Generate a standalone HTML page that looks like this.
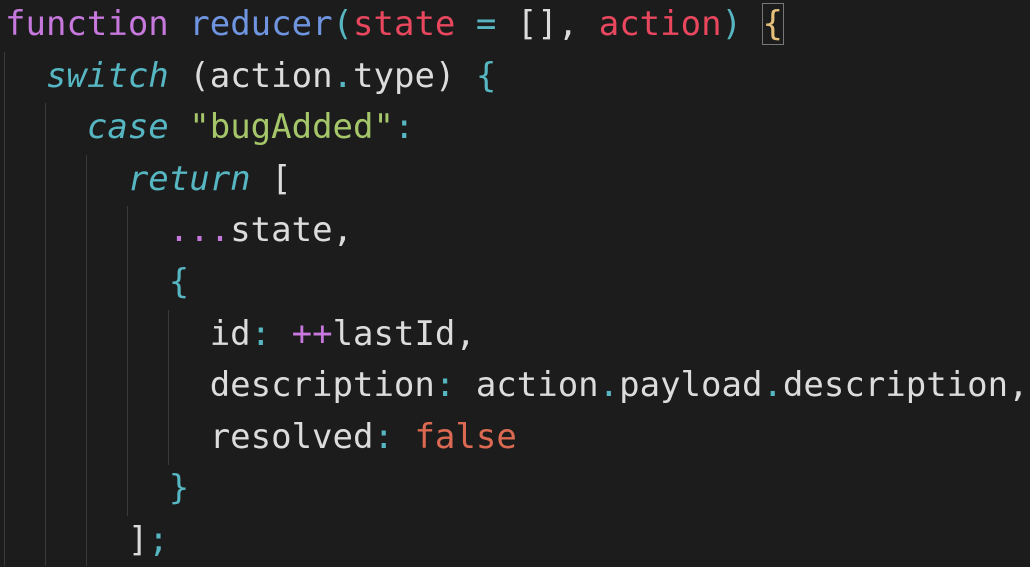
<!DOCTYPE html>
<html><head><style>
html,body{margin:0;padding:0;background:#1c1c1c;width:1030px;height:566px;overflow:hidden}
pre{margin:0;position:absolute;left:5px;top:-1px;font-family:"DejaVu Sans Mono","Liberation Mono",monospace;font-size:34px;line-height:51.6px;color:#dcdcdc;white-space:pre}
.k{color:#c678dd}.f{color:#6f95e0}.p{color:#e8475e}.c{color:#56b6c2;font-style:italic}.cy{color:#56b6c2}.s{color:#a5c76a}.o{color:#dc6a52}
.y{color:#e5c07b;outline:1px solid #777;}
.g{position:absolute;width:1px;background:#3a3a3a}
</style></head><body>
<div class="g" style="left:4px;top:52px;height:514px"></div>
<div class="g" style="left:45px;top:103px;height:463px"></div>
<div class="g" style="left:86px;top:155px;height:411px"></div>
<div class="g" style="left:127px;top:206px;height:310px"></div>
<div class="g" style="left:168px;top:310px;height:155px"></div>
<pre><span class="k">function</span> <span class="f">reducer</span><span class="cy">(</span><span class="p">state</span> <span class="cy">=</span> [], <span class="p">action</span><span class="cy">)</span> <span class="y">{</span>
  <span class="c">switch</span> (action<span class="cy">.</span>type) <span class="cy">{</span>
    <span class="c">case</span> <span class="s">"bugAdded"</span><span class="cy">:</span>
      <span class="c">return</span> [
        <span class="k">...</span>state,
        <span class="cy">{</span>
          id<span class="cy">:</span> <span class="k">++</span>lastId,
          description<span class="cy">:</span> action<span class="cy">.</span>payload<span class="cy">.</span>description,
          resolved<span class="cy">:</span> <span class="o">false</span>
        <span class="cy">}</span>
      ]<span class="cy">;</span></pre>
</body></html>
